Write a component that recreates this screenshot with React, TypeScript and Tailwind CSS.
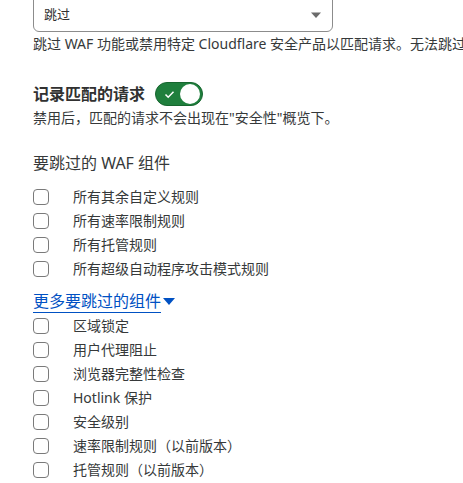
import React from "react";

const font = { fontFamily: '"Noto Sans", "Noto Sans CJK SC", sans-serif' };

function Box({ label }: { label: string }) {
  return (
    <div className="flex items-center h-[24px]">
      <span className="w-[16px] h-[16px] border border-[#7a7a7a] rounded-[4px] bg-white shrink-0" />
      <span className="ml-[24px] text-[14px] text-[#36393a] leading-[24px]">{label}</span>
    </div>
  );
}

export default function App() {
  const first = ["所有其余自定义规则", "所有速率限制规则", "所有托管规则", "所有超级自动程序攻击模式规则"];
  const more = ["区域锁定", "用户代理阻止", "浏览器完整性检查", "Hotlink 保护", "安全级别", "速率限制规则（以前版本）", "托管规则（以前版本）"];
  return (
    <div className="w-[463px] h-[483px] overflow-hidden bg-white text-[#36393a]" style={font}>
      <div className="pl-[33px]">
        <div className="mt-[-8px] w-[300px] h-[40px] border border-[#8c8c8c] rounded-[6px] flex items-center justify-between pl-[10px] pr-[8px] pt-[6px]">
          <span className="text-[13px] text-[#313131]">跳过</span>
          <svg width="12" height="8" viewBox="0 0 12 8" className="mr-[2px]">
            <path d="M1 1.5h10L6 7z" fill="#6b6b6b" />
          </svg>
        </div>
        <div className="text-[14px] leading-[20px] mt-[2px] whitespace-nowrap">
          跳过 WAF 功能或禁用特定 Cloudflare 安全产品以匹配请求。无法跳过某些规则。
        </div>
        <div className="flex items-center mt-[28px] h-[24px]">
          <span className="text-[16px] font-bold text-[#313131]">记录匹配的请求</span>
          <span className="ml-[10px] w-[48px] h-[24px] rounded-full bg-[#1f7f3d] flex items-center justify-between pl-[8px] pr-[2px] border border-[#17662f]">
            <svg width="11" height="9" viewBox="0 0 11 9">
              <path d="M1.5 4.5l2.7 2.7L9.5 1.8" fill="none" stroke="white" strokeWidth="1.5" />
            </svg>
            <span className="w-[20px] h-[20px] rounded-full bg-white" />
          </span>
        </div>
        <div className="text-[14px] leading-[20px] mt-[2px]">禁用后，匹配的请求不会出现在"安全性"概览下。</div>
        <div className="text-[16px] leading-[24px] mt-[23px]">要跳过的 WAF 组件</div>
        <div className="mt-[10px] flex flex-col">
          {first.map((l) => (
            <Box key={l} label={l} />
          ))}
        </div>
        <div className="mt-[7px] flex items-center h-[26px]">
          <span className="text-[16px] text-[#0051c3] border-b border-[#0051c3] leading-[22px]">更多要跳过的组件</span>
          <svg width="14" height="9" viewBox="0 0 14 9" className="ml-[1px]">
            <path d="M1 1h12L7 8z" fill="#0051c3" />
          </svg>
        </div>
        <div className="flex flex-col">
          {more.map((l) => (
            <Box key={l} label={l} />
          ))}
        </div>
      </div>
    </div>
  );
}
